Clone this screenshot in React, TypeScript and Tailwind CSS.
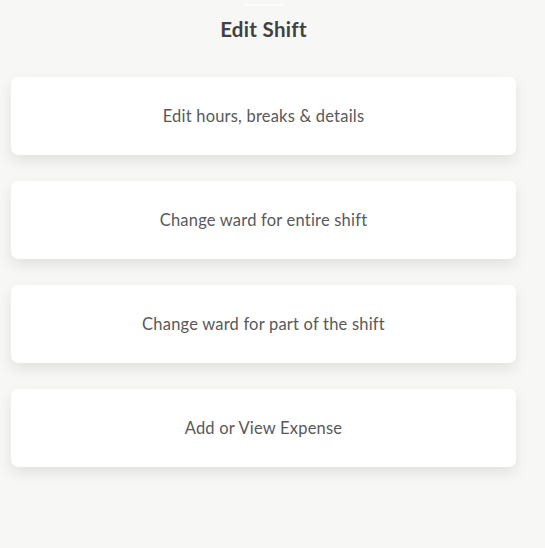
import React from "react";

const items = [
  "Edit hours, breaks & details",
  "Change ward for entire shift",
  "Change ward for part of the shift",
  "Add or View Expense",
];

export default function App() {
  return (
    <div
      className="w-[545px] h-[548px] bg-[#f7f7f5] overflow-hidden"
      style={{ fontFamily: "Lato, 'Noto Sans', sans-serif" }}
    >
      <div className="w-[505px] ml-[11px] flex flex-col">
        <div className="flex justify-center pt-[4px]">
          <div className="w-[40px] h-[2px] rounded-full bg-white/60" />
        </div>
        <div className="h-[47px] flex items-center justify-center">
          <h1 className="text-[20.5px] font-bold text-[#414141] tracking-[0.3px]">Edit Shift</h1>
        </div>
        <div className="flex flex-col gap-[26px] mt-[24px]">
          {items.map((t) => (
            <div
              key={t}
              className="h-[78px] bg-white rounded-[7px] shadow-[0_6px_14px_rgba(0,0,0,0.09)] flex items-center justify-center"
            >
              <span className="text-[16.5px] text-[#595959] tracking-[0.2px]">{t}</span>
            </div>
          ))}
        </div>
      </div>
    </div>
  );
}
